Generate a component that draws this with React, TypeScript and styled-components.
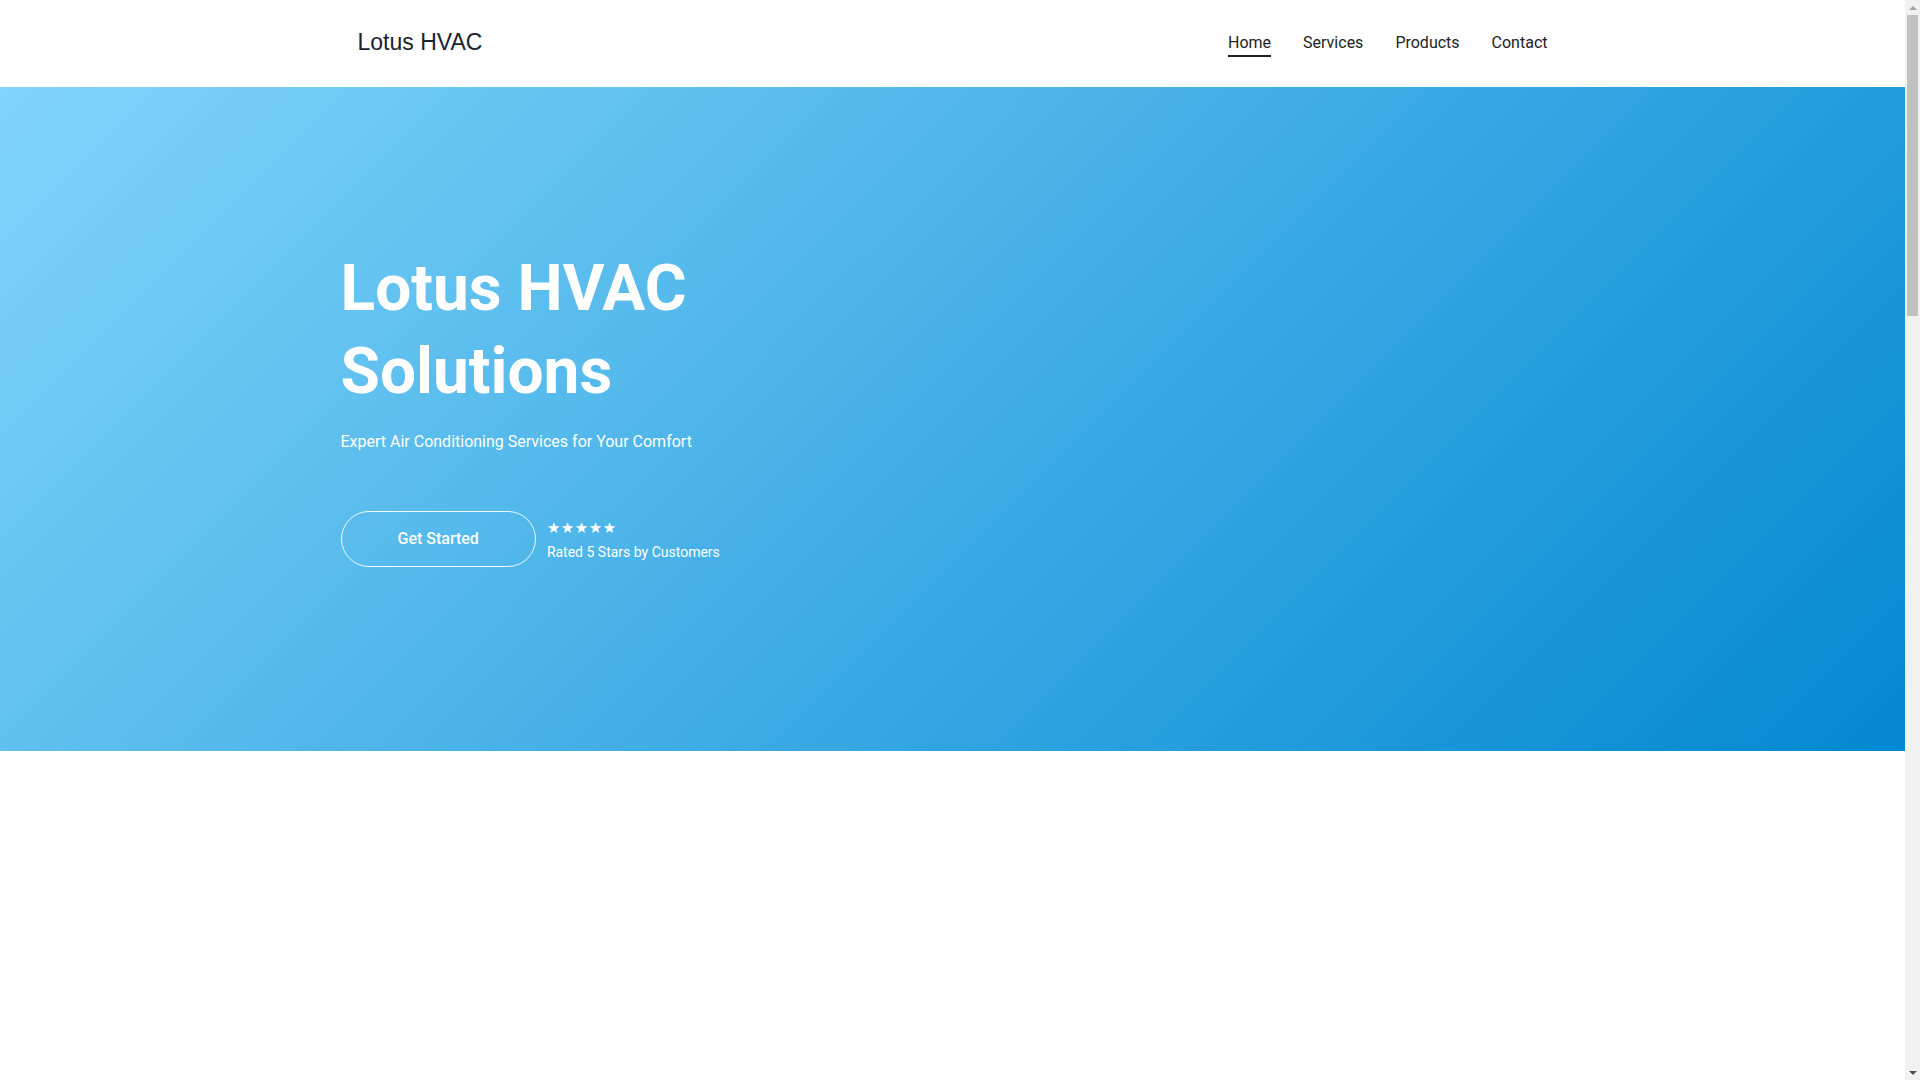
import styled, { createGlobalStyle } from "styled-components";

const GlobalStyle = createGlobalStyle`
  * {
    box-sizing: border-box;
  }

  body {
    margin: 0;
    font-family: Roboto, "Liberation Sans", Arial, sans-serif;
    color: #222;
    background: #fff;
  }
`;

const navItems = ["Home", "Services", "Products", "Contact"];

export default function App() {
  return (
    <>
      <GlobalStyle />
      <Page>
        <Header>
          <Container>
            <HeaderRow>
              <Logo href="#">Lotus HVAC</Logo>
              <Nav>
                {navItems.map((item, i) => (
                  <NavLink key={item} href="#" $active={i === 0}>
                    {item}
                  </NavLink>
                ))}
              </Nav>
            </HeaderRow>
          </Container>
        </Header>

        <Hero>
          <Container>
            <Title>
              Lotus HVAC
              <br />
              Solutions
            </Title>
            <Subtitle>Expert Air Conditioning Services for Your Comfort</Subtitle>
            <Actions>
              <CtaButton type="button">Get Started</CtaButton>
              <Rating>
                <Stars>★★★★★</Stars>
                <RatingText>Rated 5 Stars by Customers</RatingText>
              </Rating>
            </Actions>
          </Container>
        </Hero>

        <Content />
      </Page>

      {/* window scrollbar, as seen in the screenshot */}
      <ScrollTrack aria-hidden>
        <ScrollArrow $dir="up" />
        <ScrollThumb />
        <ScrollArrow $dir="down" />
      </ScrollTrack>
    </>
  );
}

const Page = styled.div`
  margin-right: 15px;
`;

const Container = styled.div`
  max-width: 1224px;
  margin: 0 auto;
`;

const Header = styled.header`
  height: 87px;
  background: #fff;
`;

const HeaderRow = styled.div`
  height: 87px;
  padding: 0 17px;
  display: flex;
  align-items: center;
  justify-content: space-between;
`;

const Logo = styled.a`
  font-family: "Liberation Sans", Arial, sans-serif;
  font-size: 23px;
  color: #1b2230;
  text-decoration: none;
  margin-top: -2px;
`;

const Nav = styled.nav`
  display: flex;
  gap: 32px;
  margin-top: -2px;
`;

const NavLink = styled.a<{ $active?: boolean }>`
  font-size: 16px;
  line-height: 24px;
  color: #222;
  text-decoration: none;
  border-bottom: 2px solid ${({ $active }) => ($active ? "#222" : "transparent")};
  margin-bottom: -2px;
`;

const Hero = styled.section`
  height: 664px;
  padding-top: 160px;
  background: linear-gradient(135deg, #81d4fa 0%, #0288d1 100%);
  color: #fff;
`;

const Title = styled.h1`
  margin: 0;
  font-size: 64px;
  line-height: 1.3;
  font-weight: 700;
`;

const Subtitle = styled.p`
  margin: 17px 0 0;
  font-size: 16px;
  line-height: 24px;
  font-weight: 400;
`;

const Actions = styled.div`
  margin-top: 57px;
  display: flex;
  align-items: center;
  gap: 11px;
`;

const CtaButton = styled.button`
  font-family: Roboto, sans-serif;
  font-size: 16px;
  line-height: 24px;
  font-weight: 500;
  color: #fff;
  background: transparent;
  border: 1px solid rgba(255, 255, 255, 0.9);
  border-radius: 999px;
  padding: 15px 56px;
  cursor: pointer;
`;

const Rating = styled.div`
  display: flex;
  flex-direction: column;
  gap: 5px;
  padding-top: 2px;
`;

const Stars = styled.span`
  font-family: "DejaVu Sans", sans-serif;
  font-size: 15px;
  line-height: 18px;
  letter-spacing: 0.5px;
`;

const RatingText = styled.span`
  font-size: 14px;
  line-height: 20px;
`;

const Content = styled.main`
  height: 3016px;
  background: #fff;
`;

const ScrollTrack = styled.div`
  position: fixed;
  top: 0;
  right: 0;
  width: 15px;
  height: 100vh;
  background: #f1f1f1;
  display: flex;
  flex-direction: column;
  align-items: center;
`;

const ScrollArrow = styled.div<{ $dir: "up" | "down" }>`
  width: 15px;
  height: 15px;
  display: flex;
  align-items: center;
  justify-content: center;
  margin-top: ${({ $dir }) => ($dir === "down" ? "auto" : "0")};

  &::before {
    content: "";
    border-left: 4px solid transparent;
    border-right: 4px solid transparent;
    ${({ $dir }) =>
      $dir === "up"
        ? "border-bottom: 4px solid #a3a3a3;"
        : "border-top: 4px solid #505050;"}
  }
`;

const ScrollThumb = styled.div`
  width: 11px;
  height: 301px;
  background: #c1c1c1;
`;
